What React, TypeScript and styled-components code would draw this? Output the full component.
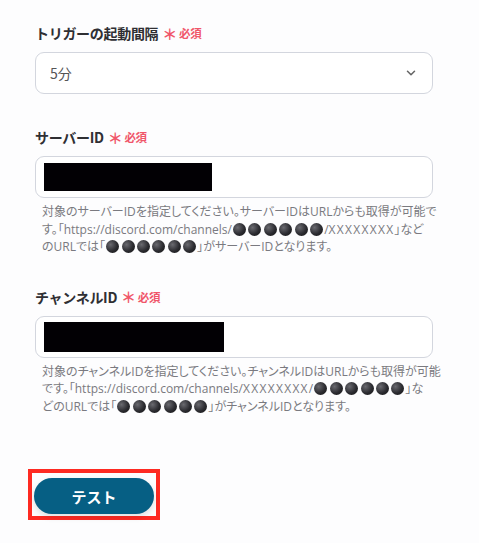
import React from "react";
import styled, { createGlobalStyle } from "styled-components";

const GlobalStyle = createGlobalStyle`
  html, body {
    margin: 0;
    padding: 0;
    background: #fdfdfe;
  }
  body {
    font-family: "Noto Sans CJK JP", "Noto Sans", sans-serif;
    color: #333;
  }
`;

const Page = styled.div`
  width: 479px;
  height: 543px;
  box-sizing: border-box;
  padding: 22px 46px 0 35px;
  display: flex;
  flex-direction: column;
`;

const Field = styled.div<{ $gap?: number }>`
  display: flex;
  flex-direction: column;
  margin-bottom: ${({ $gap }) => $gap ?? 0}px;
`;

const Label = styled.div`
  display: flex;
  align-items: center;
  gap: 4px;
  font-size: 14px;
  font-weight: 700;
  color: #2f2f33;
  line-height: 22px;
  margin-bottom: 8px;
  letter-spacing: -0.3px;
`;

const Required = styled.span`
  color: #f0566a;
  font-size: 11.5px;
  font-weight: 700;
  display: inline-flex;
  align-items: center;
  gap: 2px;
`;

const Star = styled.span`
  font-size: 15px;
  line-height: 1;
`;

const Box = styled.div`
  height: 42px;
  box-sizing: border-box;
  border: 1px solid #d3d6de;
  border-radius: 9px;
  background: #fff;
  display: flex;
  align-items: center;
  justify-content: space-between;
  padding: 0 14px 0 8px;
`;

const SelectValue = styled.span`
  font-size: 14px;
  color: #555;
  padding-left: 6px;
`;

const Redact = styled.div<{ $w: number; $h: number }>`
  width: ${({ $w }) => $w}px;
  height: ${({ $h }) => $h}px;
  background: #020004;
`;

const Help = styled.p`
  margin: 5px -8px 0 7px;
  font-family: "Open Sans", "Noto Sans CJK JP", sans-serif;
  font-size: 12px;
  line-height: 17.5px;
  color: #7a7a80;
  font-feature-settings: "palt";
  white-space: nowrap;
`;

const Mask = styled.span`
  letter-spacing: 1.3px;
`;

const Dot = styled.span`
  display: inline-block;
  width: 13px;
  height: 13px;
  border-radius: 50%;
  margin: 0 1.2px;
  vertical-align: -2px;
  background: radial-gradient(circle at 35% 35%, #6a6a70 0%, #2b2b30 55%, #111 100%);
`;

const Footer = styled.div`
  margin-top: 54px;
  display: flex;
`;

const Highlight = styled.div`
  border: 4px solid #fe2a22;
  padding: 5px 2px 2px 2px;
  margin-left: -7px;
`;

const Button = styled.button`
  width: 120px;
  height: 36px;
  border: none;
  border-radius: 18px;
  background: #065f84;
  color: #fff;
  font-family: "Noto Sans CJK JP", sans-serif;
  font-size: 15px;
  font-weight: 700;
  box-shadow: 0 3px 6px rgba(0, 0, 0, 0.12);
  cursor: pointer;
`;

const Chevron = () => (
  <svg width="14" height="14" viewBox="0 0 24 24" fill="none" stroke="#666" strokeWidth="2.6" strokeLinecap="round" strokeLinejoin="round">
    <path d="M6 9l6 6 6-6" />
  </svg>
);

const Dots = () => (
  <>
    <Dot />
    <Dot />
    <Dot />
    <Dot />
    <Dot />
    <Dot />
  </>
);

const Req = () => (
  <Required>
    <Star>＊</Star>必須
  </Required>
);

export default function App() {
  return (
    <>
      <GlobalStyle />
      <Page>
        <Field $gap={32}>
          <Label>
            トリガーの起動間隔 <Req />
          </Label>
          <Box>
            <SelectValue>5分</SelectValue>
            <Chevron />
          </Box>
        </Field>

        <Field $gap={30}>
          <Label>
            サーバーID <Req />
          </Label>
          <Box>
            <Redact $w={168} $h={28} />
          </Box>
          <Help>
            対象のサーバーIDを指定してください。サーバーIDはURLからも取得が可能で
            <br />
            す。「https://discord.com/channels/
            <Dots />
            /<Mask>XXXXXXXX</Mask>」など
            <br />
            のURLでは「
            <Dots />
            」がサーバーIDとなります。
          </Help>
        </Field>

        <Field>
          <Label>
            チャンネルID <Req />
          </Label>
          <Box>
            <Redact $w={180} $h={30} />
          </Box>
          <Help>
            対象のチャンネルIDを指定してください。チャンネルIDはURLからも取得が可能
            <br />
            です。「https://discord.com/channels/<Mask>XXXXXXXX</Mask>/
            <Dots />
            」な
            <br />
            どのURLでは「
            <Dots />
            」がチャンネルIDとなります。
          </Help>
        </Field>

        <Footer>
          <Highlight>
            <Button>テスト</Button>
          </Highlight>
        </Footer>
      </Page>
    </>
  );
}
